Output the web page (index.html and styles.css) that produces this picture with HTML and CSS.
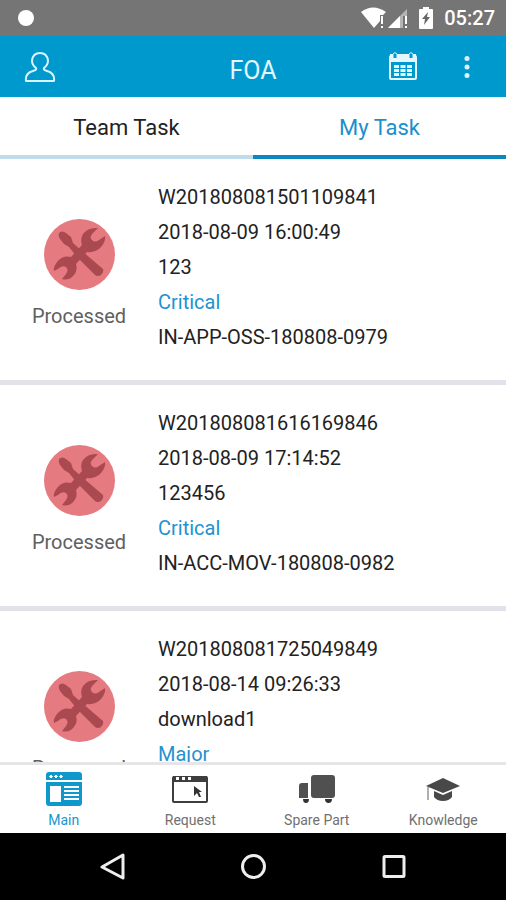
FILE: index.html
```html
<!DOCTYPE html>
<html lang="en">
<head>
<meta charset="utf-8">
<meta name="viewport" content="width=device-width, initial-scale=1">
<title>FOA</title>
<link rel="stylesheet" href="styles.css">
</head>
<body>
<svg class="defs" aria-hidden="true">
  <symbol id="tools" viewBox="0 0 71 71">
    <circle cx="35.500" cy="35.500" r="35.500" fill="#e57b80"/>
    <g fill="#aa4a50">
      <path d="M15 14 Q18 11 22 14 L27 18 L29 24 L38 32 L59 50 Q60 53 57 56 Q54 58 51 56 L33 38 L25 28 L20 25 L16 20 Q14 17 15 14Z"/>
      <path d="M54 9 Q44 8 39 15 Q36 20 38 26 L27 38 Q19 36 13 43 Q9 48 10 52 L14 50 Q18 46 22 48 Q25 51 22 55 L18 60 Q25 62 30 56 Q34 51 32 45 L43 33 Q52 34 57 28 Q62 22 61 17 L55 21 Q51 24 48 21 Q45 18 49 14Z"/>
    </g>
  </symbol>
</svg>
<div class="app">
  <header>
    <div class="status">
      <span class="dot"></span>
      <div class="signals">
        <svg width="49" height="24" viewBox="0 0 49 24" fill="#fff">
          <path d="M2 6 Q14 -3 27 6 L24 9 H21 V15 L15 22Z"/>
          <path d="M22 10h2v8h-2zM22 20h2v2h-2z"/>
          <path d="M48 3V10H44V22H29Z" fill="#b5b5b5"/>
          <path d="M41 10V22H29Z"/>
          <path d="M46 10h2v8h-2zM46 20h2v2h-2z"/>
        </svg>
        <svg width="14" height="22" viewBox="0 0 14 22">
          <path d="M4 0h6v2h3q1 0 1 1v18q0 1-1 1H1q-1 0-1-1V3q0-1 1-1h3z" fill="#fff"/>
          <path d="M9 5 3 12h3l-1 6 6-8H8z" fill="#666"/>
        </svg>
        <time>05:27</time>
      </div>
    </div>
    <div class="bar">
      <button class="icon-btn" aria-label="Profile">
        <svg width="32" height="32" viewBox="0 0 32 32" fill="none" stroke="#d9f4ff" stroke-width="2" stroke-linejoin="round">
          <path d="M12 17Q8 14 8 9.500Q9 2 16 2T24 9.500Q24 14 20 17Q19 19 23 20Q31 22 30 30H2Q1 22 9 20Q13 19 12 17Z"/>
        </svg>
      </button>
      <h1>FOA</h1>
      <div class="actions">
        <button class="icon-btn" aria-label="Calendar">
          <svg width="28" height="30" viewBox="0 0 28 30" fill="none" stroke="#e4f7ff">
            <rect x="1" y="4" width="26" height="23" rx="1" stroke-width="2"/>
            <path d="M1 2H27V10H1Z" fill="#e4f7ff" stroke="none"/>
            <path d="M6 1v5M22 1v5" stroke="#0099ce" stroke-width="4"/>
            <path d="M4 6V2Q6-1 8 2V6M20 6V2Q22-1 24 2V6" stroke-width="1"/>
            <path d="M5 14.500H23M5 18.500H23M5 22.500H23" stroke-width="3" stroke-dasharray="5 1.500"/>
          </svg>
        </button>
        <button class="icon-btn" aria-label="More options">
          <svg width="6" height="24" viewBox="0 0 6 24" fill="#d9f4ff"><circle cx="3" cy="3.500" r="2.500"/><circle cx="3" cy="12" r="2.500"/><circle cx="3" cy="20.500" r="2.500"/></svg>
        </button>
      </div>
    </div>
    <nav class="tabs">
      <button>Team Task</button>
      <button class="on">My Task</button>
    </nav>
  </header>
  <main>
    <ul class="list">
      <li>
        <div class="state"><svg width="71" height="71"><use href="#tools"/></svg><span>Processed</span></div>
        <div class="info"><p>W201808081501109841</p><p>2018-08-09 16:00:49</p><p>123</p><p class="level">Critical</p><p>IN-APP-OSS-180808-0979</p></div>
      </li>
      <li>
        <div class="state"><svg width="71" height="71"><use href="#tools"/></svg><span>Processed</span></div>
        <div class="info"><p>W201808081616169846</p><p>2018-08-09 17:14:52</p><p>123456</p><p class="level">Critical</p><p>IN-ACC-MOV-180808-0982</p></div>
      </li>
      <li>
        <div class="state"><svg width="71" height="71"><use href="#tools"/></svg><span>Processed</span></div>
        <div class="info"><p>W201808081725049849</p><p>2018-08-14 09:26:33</p><p>download1</p><p class="level">Major</p></div>
      </li>
    </ul>
  </main>
  <nav class="bottom">
    <a href="#main" class="on">
      <svg width="36" height="34" viewBox="0 0 36 34">
        <path d="M3 0H33Q36 0 36 3V8H0V3Q0 0 3 0ZM0 10H36V31Q36 34 33 34H3Q0 34 0 31Z" fill="#0f98cc"/>
        <path d="M4 14H15V30H4ZM18 14H33V16H18ZM18 18H33V20H18ZM18 22H33V24H18ZM18 26H33V28H18Z" fill="#fff"/>
        <path d="M5 3l1.500 1.500-1.500 1.500-1.500-1.500zM10 3l1.500 1.500-1.500 1.500-1.500-1.500zM15 3l1.500 1.500-1.500 1.500-1.500-1.500z" fill="#fff" stroke="#fff"/>
      </svg>
      <span>Main</span>
    </a>
    <a href="#request">
      <svg width="36" height="34" viewBox="0 0 36 34">
        <rect x="1" y="5" width="34" height="25" rx="1" fill="#fff" stroke="#3e3e3e" stroke-width="2"/>
        <path d="M1 4H35V10H1Z" fill="#3e3e3e"/>
        <path d="M4 5h3v3H4zM10 5h3v3h-3zM16 5h3v3h-3z" fill="#fff"/>
        <path d="M22 14 30 20H27L29 25H27L25 21L22 24Z" fill="#333"/>
      </svg>
      <span>Request</span>
    </a>
    <a href="#spare">
      <svg width="36" height="34" viewBox="0 0 36 34" fill="#505050">
        <rect x="12" y="3" width="24" height="23" rx="3"/>
        <path d="M3 11H9V26H0V14Q0 11 3 11Z"/>
        <path d="M4 27H10Q10 31 7 31T4 27ZM26 27H33Q33 31 29.500 31T26 27Z" fill="#333"/>
      </svg>
      <span>Spare Part</span>
    </a>
    <a href="#knowledge">
      <svg width="36" height="34" viewBox="0 0 36 34">
        <path d="M18 6 35 14 18 21 1 14Z" fill="#484848"/>
        <path d="M9 19 18 23 27 19V25Q24 29 18 29T9 25Z" fill="#484848"/>
        <path d="M3 15V28" stroke="#b0b0b0" stroke-width="2"/>
      </svg>
      <span>Knowledge</span>
    </a>
  </nav>
  <div class="system">
    <button aria-label="Back"><svg width="28" height="28" viewBox="0 0 28 28"><path d="M24 2V25L3 14Z"/></svg></button>
    <button aria-label="Home"><svg width="28" height="28" viewBox="0 0 28 28"><circle cx="14.500" cy="13.500" r="11"/></svg></button>
    <button aria-label="Recent apps"><svg width="28" height="28" viewBox="0 0 28 28"><rect x="5" y="3.500" width="20" height="20" rx="1"/></svg></button>
  </div>
</div>
</body>
</html>
```
FILE: styles.css
```css
* { box-sizing: border-box; margin: 0; padding: 0; }
body { font-family: Roboto, "Liberation Sans", sans-serif; color: #222; background: #fff; }
button { font: inherit; color: inherit; background: none; border: 0; cursor: pointer; }
a { color: inherit; text-decoration: none; }
svg { display: block; flex: none; }
.defs { width: 0; height: 0; position: absolute; }
.app { display: flex; flex-direction: column; height: 100vh; }

.status { display: flex; align-items: center; justify-content: space-between; height: 36px; padding: 0 11px 0 18px; background: #757575; color: #fff; }
.dot { width: 16px; height: 16px; border-radius: 50%; background: #fff; }
.signals { display: flex; align-items: center; gap: 11px; }
.signals time { font-size: 20px; font-weight: 500; line-height: 36px; }

.bar { display: grid; grid-template-columns: 1fr auto 1fr; align-items: center; height: 61px; padding: 0 24px; background: #0099ce; color: #e4f7ff; }
.bar h1 { font-size: 25px; font-weight: 400; line-height: 28px; padding-top: 8px; }
.icon-btn { display: flex; align-items: center; }
.actions { display: flex; justify-content: flex-end; gap: 47px; padding-right: 12px; }

.tabs { display: grid; grid-template-columns: 1fr 1fr; }
.tabs button { height: 62px; padding-top: 2px; font-size: 22px; border-bottom: 4px solid #bfdcec; }
.tabs .on { color: #1b8fcb; border-color: #0c87c0; }

main { flex: 1; min-height: 0; overflow: hidden; }
.list { list-style: none; }
.list li { display: grid; grid-template-columns: 158px 1fr; padding: 21px 0 25px; border-bottom: 5px solid #e2e2ea; font-size: 20px; }
.state { display: flex; flex-direction: column; align-items: center; gap: 12px; padding-top: 39px; color: #606060; line-height: 28px; }
.info { line-height: 35px; }
.level { color: #2492cf; }

.bottom { display: grid; grid-template-columns: repeat(4, 1fr); height: 71px; border-top: 3px solid #e6e6e8; background: #fff; color: #707070; font-size: 14px; }
.bottom a { display: flex; flex-direction: column; align-items: center; gap: 4px; padding: 7px 0 0 1px; line-height: 20px; }
.bottom .on { color: #1b95cd; }

.system { display: flex; align-items: center; justify-content: center; gap: 112px; height: 67px; background: #000; }
.system svg { fill: none; stroke: #eee; stroke-width: 3px; stroke-linejoin: round; }
```
